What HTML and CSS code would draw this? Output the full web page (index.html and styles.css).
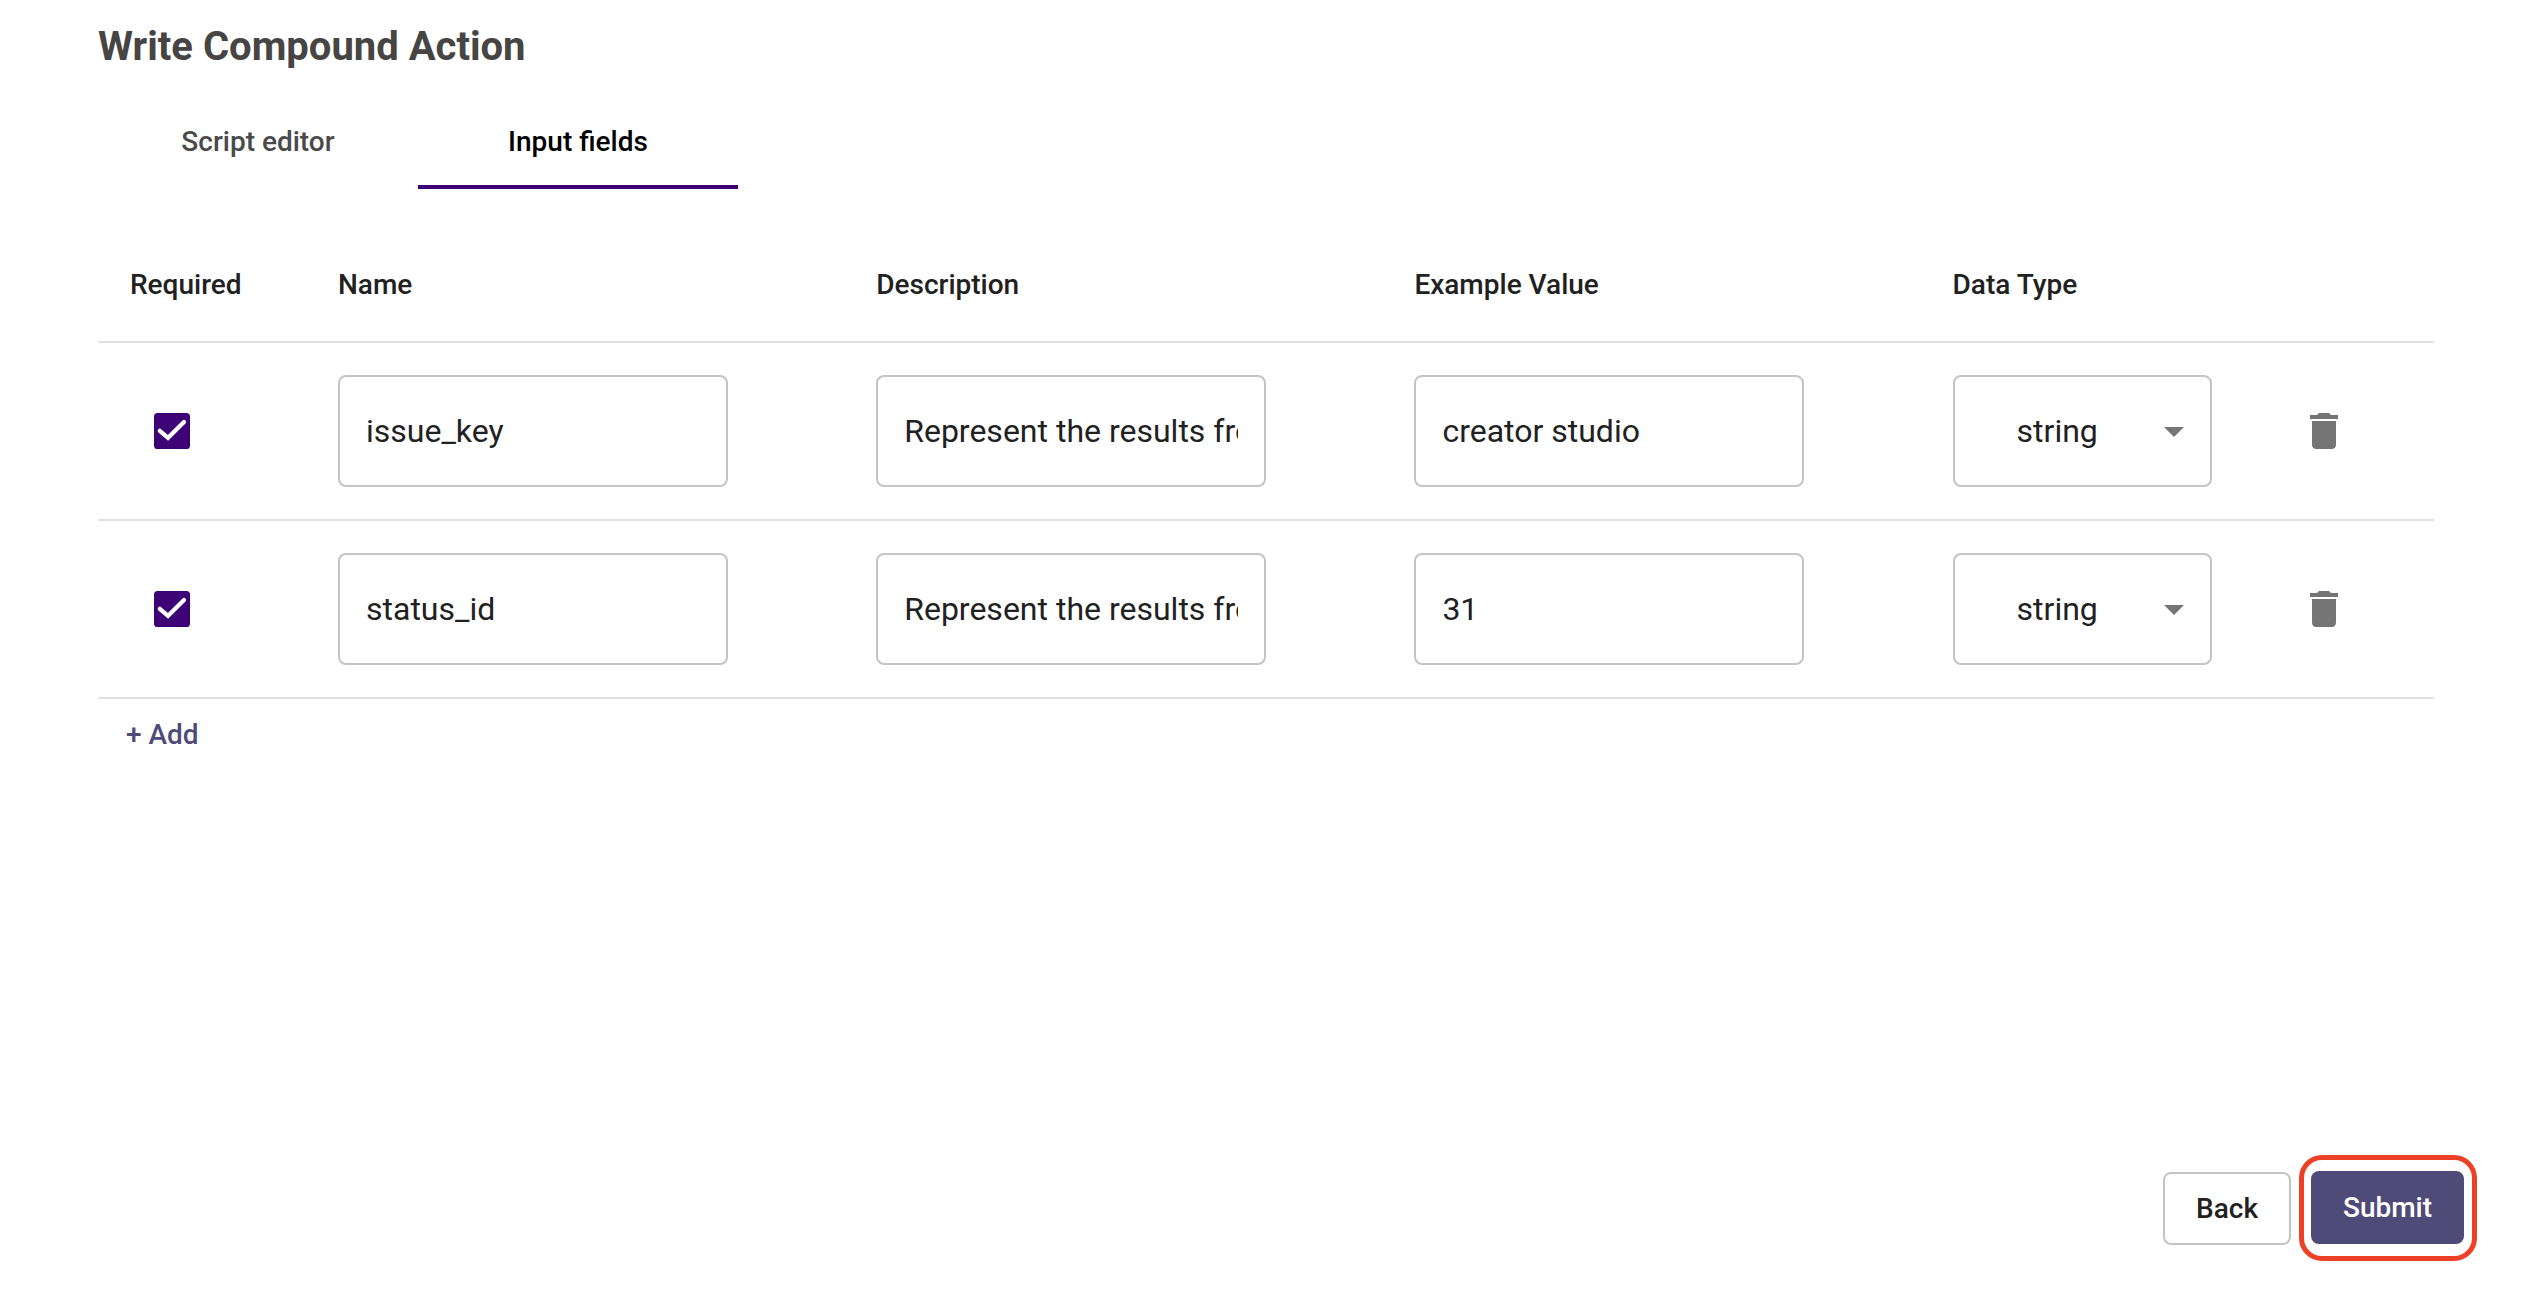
FILE: index.html
```html
<!DOCTYPE html>
<html lang="en">
<head>
<meta charset="utf-8">
<title>Write Compound Action</title>
<link rel="stylesheet" href="styles.css">
</head>
<body>
<svg class="sprite" aria-hidden="true">
  <symbol id="check" viewBox="0 0 24 24"><rect x="3" y="3" width="18" height="18" rx="1.8" fill="#3d0376"/><path d="M5.9 11.9 10 15.4 18 7.5" fill="none" stroke="#fff" stroke-width="2.1" stroke-linecap="round"/></symbol>
  <symbol id="trash" viewBox="0 0 24 24"><path d="M6 19c0 1.1.9 2 2 2h8c1.1 0 2-.9 2-2V7H6v12zM19 4h-3.5l-1-1h-5l-1 1H5v2h14V4z"/></symbol>
  <symbol id="arrow" viewBox="0 0 24 24"><path d="M7 10l5 5 5-5z"/></symbol>
</svg>
<main class="page">
  <h1 class="title">Write Compound Action</h1>
  <nav class="tabs">
    <button class="tab">Script editor</button>
    <button class="tab tab-active">Input fields</button>
  </nav>
  <section class="table">
    <div class="row head">
      <div>Required</div><div>Name</div><div>Description</div><div>Example Value</div><div>Data Type</div><div></div>
    </div>
    <div class="row">
      <div class="check"><svg class="icon"><use href="#check"/></svg></div>
      <div><div class="field"><span class="value">issue_key</span></div></div>
      <div><div class="field"><span class="value">Represent the results from</span></div></div>
      <div><div class="field"><span class="value">creator studio</span></div></div>
      <div><div class="field select"><span class="choice">string</span><svg class="icon"><use href="#arrow"/></svg></div></div>
      <div class="remove"><svg class="icon"><use href="#trash"/></svg></div>
    </div>
    <div class="row">
      <div class="check"><svg class="icon"><use href="#check"/></svg></div>
      <div><div class="field"><span class="value">status_id</span></div></div>
      <div><div class="field"><span class="value">Represent the results from</span></div></div>
      <div><div class="field"><span class="value">31</span></div></div>
      <div><div class="field select"><span class="choice">string</span><svg class="icon"><use href="#arrow"/></svg></div></div>
      <div class="remove"><svg class="icon"><use href="#trash"/></svg></div>
    </div>
  </section>
  <button class="add">+ Add</button>
  <footer class="actions">
    <button class="btn back">Back</button>
    <div class="highlight"><button class="btn submit">Submit</button></div>
  </footer>
</main>
</body>
</html>
```

FILE: styles.css
```css
* { box-sizing: border-box; }
body { margin: 0; background: #fff; color: #212121; font-family: Roboto, sans-serif; }
button { font: inherit; color: inherit; background: none; border: 0; margin: 0; padding: 0; }
.sprite { position: absolute; width: 0; height: 0; }
.page { height: 1294px; padding: 23px 98px 0; display: flex; flex-direction: column; }
.title { margin: 0; height: 48px; line-height: 48px; font-size: 40px; font-weight: 700; color: #464543; }
.tabs { display: flex; margin-top: 22px; height: 96px; }
.tab { width: 320px; padding-top: 5px; border-bottom: 4px solid transparent; font-size: 28px; font-weight: 500; line-height: 36px; color: #4a4a4a; }
.tab-active { color: #000; border-color: #3d0376; }
.table { margin-top: 56px; }
.row { display: grid; grid-template-columns: 208px repeat(3, 538.2px) 344px 1fr; align-items: center; height: 178px; border-bottom: 2px solid #e0e0e0; }
.row > div { padding-left: 32px; }
.head { height: 98px; padding-bottom: 17px; font-size: 28px; font-weight: 500; }
.field { width: 390px; height: 112px; border: 2px solid #c4c4c4; border-radius: 8px; padding: 0 26px; display: flex; align-items: center; font-size: 32px; }
.value { flex: 1; overflow: hidden; white-space: nowrap; }
.select { width: 259px; padding: 0 12px 0 62px; }
.choice { flex: 1; }
.icon { display: block; width: 48px; height: 48px; fill: #757575; }
.row > .check { padding-left: 50px; }
.row > .remove { padding-left: 35px; }
.add { align-self: flex-start; margin: 18px 0 0 28px; font-size: 28px; font-weight: 500; line-height: 36px; color: #4f4b79; }
.actions { display: flex; align-items: center; justify-content: flex-end; gap: 8px; margin: auto -43px 33px 0; }
.btn { height: 73px; font-size: 28px; font-weight: 500; border-radius: 8px; }
.back { width: 128px; border: 2px solid #c4c4c4; }
.highlight { border: 5px solid #ee4026; border-radius: 23px; padding: 11px 8px 12px 7px; }
.submit { width: 153px; background: #4f4b79; color: #fff; display: block; }
```
